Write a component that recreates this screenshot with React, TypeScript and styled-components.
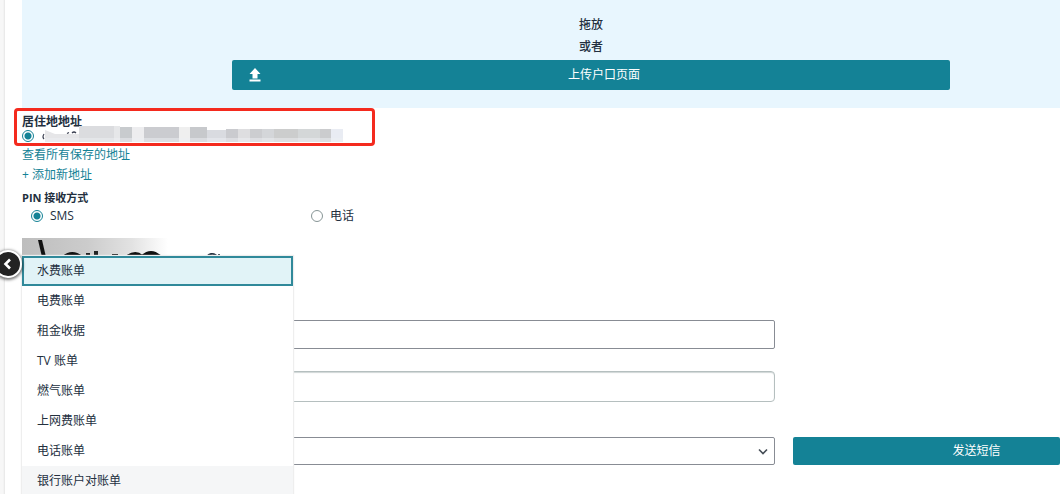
import React from 'react';
import styled, { createGlobalStyle } from 'styled-components';

const teal = '#148296';
const ink = '#232f3e';

const GlobalStyle = createGlobalStyle`
  * { box-sizing: border-box; }
  body {
    margin: 0;
    background: #fff;
    color: ${ink};
    font: 12px/20px "Open Sans", "Noto Sans CJK SC", sans-serif;
  }
  button, input, select { font: inherit; color: inherit; }
`;

const Page = styled.div`
  display: flex;
  position: relative;
  min-height: 100vh;
  overflow: hidden;
`;

const Rail = styled.aside`
  flex: 0 0 5px;
  background: linear-gradient(90deg, #f7f7f7 60%, #e6e6e6);
`;

const CollapseButton = styled.button`
  position: absolute;
  top: 250px;
  left: -6px;
  z-index: 3;
  display: grid;
  place-items: center;
  width: 28px;
  height: 28px;
  padding: 0;
  border: 2px solid #fff;
  border-radius: 50%;
  background: #222;
  box-shadow: 0 1px 3px 1px rgba(0, 0, 0, 0.55);
  cursor: pointer;
`;

const Main = styled.main`
  flex: 1;
  min-width: 0;
  padding-left: 17px;
`;

const DropZone = styled.section`
  display: flex;
  flex-direction: column;
  align-items: center;
  padding: 14px 110px 18px 210px;
  background: #e8f6fe;
`;

const DropText = styled.p`
  margin: 0;
  line-height: 22px;
  font-weight: 500;
`;

const PrimaryButton = styled.button`
  height: 28px;
  padding: 0;
  border: 0;
  border-radius: 2px;
  background: ${teal};
  color: #fff;
  cursor: pointer;
`;

const UploadButton = styled(PrimaryButton)`
  display: flex;
  align-items: center;
  align-self: stretch;
  height: 30px;
  margin-top: 2px;
  padding: 0 4px 0 16px;
`;

const SendButton = styled(PrimaryButton)`
  padding-left: 100px;
`;

const ButtonText = styled.span`
  flex: 1;
`;

const AddressGroup = styled.div`
  width: 361px;
  height: 38px;
  margin: 0 0 0 -8px;
  padding: 3px 5px;
  border: 3px solid #f42a1e;
  border-radius: 4px;
`;

const Heading = styled.div<{ $small?: boolean }>`
  font-size: ${({ $small }) => ($small ? 11 : 12)}px;
  font-weight: 700;
  line-height: 16px;
`;

const AddressRow = styled.label`
  display: flex;
  align-items: center;
  gap: 7px;
  height: 12px;
`;

const RadioRow = styled.label`
  display: flex;
  align-items: center;
  gap: 7px;
`;

const Radio = styled.input`
  appearance: none;
  flex: none;
  width: 12px;
  height: 12px;
  margin: 0;
  border: 1px solid #879596;
  border-radius: 50%;
  background: #fff;
  &:checked {
    border-color: ${teal};
    background: radial-gradient(circle, ${teal} 0 3px, #fff 4px);
  }
`;

const Mask = styled.svg`
  margin-top: -4px;
`;

const Links = styled.nav`
  display: flex;
  flex-direction: column;
  align-items: flex-start;
  padding-bottom: 5px;
  margin-top: -1px;
`;

const Link = styled.a`
  color: ${teal};
  text-decoration: none;
`;

const PinGroup = styled.div`
  display: grid;
  grid-template-columns: 280px 1fr;
  padding-left: 9px;
`;

const Captcha = styled.section`
  position: relative;
  display: flex;
  height: 82px;
  margin-top: 12px;
`;

const RefreshButton = styled.button`
  width: 18px;
  height: 18px;
  margin: 15px 0 0 36px;
  padding: 0;
  border: 0;
  background: none;
`;

const Menu = styled.ul`
  position: absolute;
  top: 18px;
  left: 0;
  z-index: 2;
  width: 271px;
  margin: 0;
  padding: 0;
  list-style: none;
  background: #fff;
  box-shadow: 0 0 1px 1px #eeeeee;
`;

const Option = styled.li<{ $state?: 'selected' | 'hover' }>`
  height: 30px;
  padding: 5px 15px;
  background: ${({ $state }) =>
    $state === 'selected' ? '#e1f3f7' : $state === 'hover' ? '#f5f6f7' : '#fff'};
  box-shadow: ${({ $state }) => ($state === 'selected' ? 'inset 0 0 0 2px #30899a' : 'none')};
`;

const Fields = styled.div`
  display: grid;
  grid-template-columns: minmax(0, 753px) minmax(0, 1fr);
  column-gap: 18px;
`;

const Field = styled.input<{ $soft?: boolean }>`
  grid-column: 1;
  height: ${({ $soft }) => ($soft ? 31 : 29)}px;
  margin-bottom: ${({ $soft }) => ($soft ? 35 : 22)}px;
  padding: 0 10px;
  border: 1px solid ${({ $soft }) => ($soft ? '#b5bfbf' : '#888c94')};
  border-radius: ${({ $soft }) => ($soft ? 4 : 2)}px;
  background: #fff;
  box-shadow: ${({ $soft }) => ($soft ? 'inset 0 1px 1px #d0d6d6' : 'none')};
`;

const SelectWrap = styled.div`
  grid-column: 1;
  position: relative;
  display: grid;
`;

const Select = styled.select`
  appearance: none;
  height: 28px;
  padding: 0 28px 0 10px;
  border: 1px solid #888c94;
  border-radius: 2px;
  background: #fff;
`;

const SelectArrow = styled.svg`
  position: absolute;
  top: 11px;
  right: 7px;
  pointer-events: none;
`;

const bills = ['水费账单', '电费账单', '租金收据', 'TV 账单', '燃气账单', '上网费账单', '电话账单', '银行账户对账单'];

/* x, width, colour, top */
const blocks: [number, number, string, number][] = [
  [4, 36, '#e6e6e8', 4],
  [38, 35, '#dbdcdf', 0],
  [73, 6, '#e6e7e9', 0],
  [79, 12, '#c8cbce', 1],
  [91, 12, '#ededef', 1],
  [103, 35, '#cbccd0', 1],
  [138, 11, '#efefef', 1],
  [149, 17, '#c7c9cc', 1],
  [166, 19, '#d9dbe0', 4],
  [185, 12, '#cacbcf', 3],
  [197, 12, '#dedee0', 3],
  [209, 12, '#cccdd0', 3],
  [221, 12, '#d4d6d9', 3],
  [233, 24, '#cccdcd', 3],
  [257, 22, '#d4d7d8', 3],
  [279, 11, '#cbccce', 3],
  [290, 12, '#e9ecf3', 3],
];

function MaskedAddress() {
  return (
    <Mask width="304" height="16" role="img" aria-label="已隐藏的地址">
      {blocks.map(([x, w, fill, y]) => (
        <rect key={x} x={x} y={y} width={w} height={16 - y} fill={fill} />
      ))}
      <path d="M4 12h298v4H4z" fill="#eef0f3" opacity=".5" />
      <path d="M4 4h34v4H14z" fill="#fff" />
      <path d="M3 8q-2 3 0 5" fill="none" stroke="#3a3f50" strokeWidth="1.2" />
      <path d="M26 7.500l2-1M31 7q2-2 4 0" fill="none" stroke="#3a3f50" strokeWidth="1.2" />
    </Mask>
  );
}

function CaptchaImage() {
  return (
    <svg width="146" height="40" role="img" aria-label="验证码">
      <defs>
        <linearGradient id="fade">
          <stop offset="0" stopColor="#bdbdbd" />
          <stop offset=".45" stopColor="#cccccc" />
          <stop offset=".75" stopColor="#e2e2e2" />
          <stop offset="1" stopColor="#ffffff" />
        </linearGradient>
      </defs>
      <rect width="146" height="40" fill="url(#fade)" />
      <path d="M16 2h4l4 17h-4z" fill="#111" />
      <g fill="none" stroke="#111" strokeWidth="5">
        <path d="M42 20q8-7 17 0M106 19q8-5 13 0M121 19q8-7 16 0" />
      </g>
      <path d="M64 15h4v5h-4zM72 13h4v7h-4zM90 16h6v4h-6z" fill="#222" />
    </svg>
  );
}

export default function App() {
  return (
    <Page>
      <GlobalStyle />
      <Rail />
      <CollapseButton aria-label="收起">
        <svg width="24" height="24" viewBox="0 0 24 24">
          <path d="M14 7.500 9.500 12l4.500 4.500" fill="none" stroke="#fff" strokeWidth="2.600" />
        </svg>
      </CollapseButton>
      <Main>
        <DropZone>
          <DropText>拖放</DropText>
          <DropText>或者</DropText>
          <UploadButton>
            <svg width="14" height="14" viewBox="0 0 14 14" fill="#fff">
              <path d="M7 0 12.500 6H9.500V10.500H4.500V6H1.500zM1.500 11.500h11v2h-11z" />
            </svg>
            <ButtonText>上传户口页面</ButtonText>
          </UploadButton>
        </DropZone>

        <AddressGroup>
          <Heading>居住地地址</Heading>
          <AddressRow>
            <Radio type="radio" name="address" defaultChecked />
            <MaskedAddress />
          </AddressRow>
        </AddressGroup>
        <Links>
          <Link href="#addresses">查看所有保存的地址</Link>
          <Link href="#new-address">+ 添加新地址</Link>
        </Links>

        <Heading $small id="pin-label">PIN 接收方式</Heading>
        <PinGroup role="radiogroup" aria-labelledby="pin-label">
          <RadioRow>
            <Radio type="radio" name="pin" defaultChecked />
            SMS
          </RadioRow>
          <RadioRow>
            <Radio type="radio" name="pin" />
            电话
          </RadioRow>
        </PinGroup>

        <Captcha>
          <CaptchaImage />
          <RefreshButton aria-label="刷新">
            <svg width="18" height="18" viewBox="0 0 18 18">
              <path d="M2 8a6 6 0 0 1 12-2M15 1v5h-5" fill="none" stroke={ink} strokeWidth="1.800" />
            </svg>
          </RefreshButton>
          <Menu role="listbox" aria-label="账单类型">
            {bills.map((bill, i) => (
              <Option
                key={bill}
                role="option"
                aria-selected={i === 0}
                $state={i === 0 ? 'selected' : i === bills.length - 1 ? 'hover' : undefined}
              >
                {bill}
              </Option>
            ))}
          </Menu>
        </Captcha>

        <Fields>
          <Field aria-label="验证码输入" />
          <Field $soft aria-label="姓名" />
          <SelectWrap>
            <Select aria-label="电话号码">
              <option></option>
            </Select>
            <SelectArrow width="10" height="7" viewBox="0 0 10 7">
              <path d="M1 1.500 5 5.500 9 1.500" fill="none" stroke="#444c55" strokeWidth="1.600" />
            </SelectArrow>
          </SelectWrap>
          <SendButton>发送短信</SendButton>
        </Fields>
      </Main>
    </Page>
  );
}
